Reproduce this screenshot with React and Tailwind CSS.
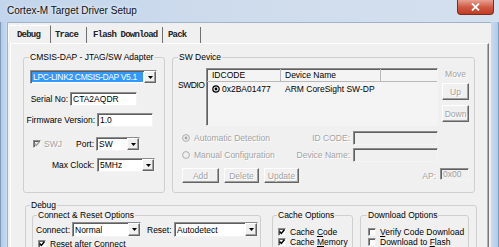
import React from 'react';

const sunken =
  'border border-t-[#8d8d8d] border-l-[#8d8d8d] border-b-[#f4f4f4] border-r-[#f4f4f4] shadow-[inset_1px_1px_0_#5f5f5f]';
const raised =
  'border border-t-white border-l-white border-b-[#646464] border-r-[#646464] shadow-[inset_-1px_-1px_0_#a0a0a0]';
const grayText = 'text-[#a3a3a3] [text-shadow:1px_1px_0_#ffffff]';

const ArrowBtn = () => (
  <div className={`w-[12px] shrink-0 bg-[#f0f0f0] ${raised} flex items-center justify-center`}>
    <svg width="5" height="3" viewBox="0 0 5 3">
      <path d="M0 0h5L2.5 3z" fill="#000" />
    </svg>
  </div>
);

const Combo = ({ value, className, selected }) => (
  <div className={`${className} ${sunken} bg-white flex`}>
    <div className="flex-1 flex items-stretch p-[1px] min-w-0">
      <div
        className={`flex items-center pl-[1px] whitespace-nowrap overflow-hidden ${
          selected ? 'w-full bg-[#3399ff] text-white tracking-[-0.35px]' : ''
        }`}
      >
        {value}
      </div>
    </div>
    <ArrowBtn />
  </div>
);

const TextBox = ({ value, className, disabled }) => (
  <div
    className={`${className} ${sunken} ${
      disabled ? 'bg-[#f0f0f0] text-[#a3a3a3]' : 'bg-white'
    } flex items-center pl-[2px] whitespace-nowrap`}
  >
    {value}
  </div>
);

const Check = ({ checked, disabled }) => (
  <div
    className={`w-[8px] h-[8px] shrink-0 ${sunken} ${
      disabled ? 'bg-[#f0f0f0]' : 'bg-white'
    } flex items-center justify-center`}
  >
    {checked && (
      <svg width="6" height="6" viewBox="0 0 6 6">
        <path
          d="M0.6 2.6 L2.3 4.4 L5.4 0.8"
          stroke={disabled ? '#a0a0a0' : '#000'}
          strokeWidth="1.5"
          fill="none"
        />
      </svg>
    )}
  </div>
);

const Radio = ({ checked }) => (
  <svg width="8" height="8" viewBox="0 0 8 8" className="shrink-0">
    <circle cx="4" cy="4" r="3.4" fill="#f0f0f0" stroke="#a5a5a5" strokeWidth="0.9" />
    {checked && <circle cx="4" cy="4" r="1.4" fill="#a5a5a5" />}
  </svg>
);

const Btn = ({ label, className }) => (
  <div className={`${className} ${raised} bg-[#f0f0f0] flex items-center justify-center ${grayText}`}>
    {label}
  </div>
);

const Group = ({ label, className, legend = 'ml-[4px]', children }) => (
  <fieldset className={`border border-[#cfcfcf] rounded-[3px] shrink-0 ${className}`}>
    <legend className={`${legend} px-[1px] leading-[10px]`}>{label}</legend>
    {children}
  </fieldset>
);

const Tab = ({ label, className, active }) => (
  <div
    className={`${className} border-r border-r-[#6f6f6f] flex items-center whitespace-nowrap ${
      active ? 'h-[18px] border-t border-l border-t-white border-l-white' : 'h-[16px]'
    }`}
  >
    {label}
  </div>
);

export default function App() {
  return (
    <div className="w-[499px] h-[247px] overflow-hidden flex flex-col bg-[#bcd2eb] font-['Liberation_Sans',Arial,sans-serif] text-[8.5px] leading-[10px] text-black">
      {/* title bar */}
      <div className="h-[22px] shrink-0 flex items-start bg-gradient-to-r from-[#c2d5ec] via-[#cfdcec] to-[#d4e0ee]">
        <div className="pl-[7px] pt-[5px] text-[10px] leading-[12px] text-[#111] [text-shadow:0_0_4px_#ffffff]">
          Cortex-M Target Driver Setup
        </div>
        <div className="ml-auto mr-[5px] w-[37px] h-[15px] rounded-b-[4px] border border-t-0 border-[#7d2b1f] bg-gradient-to-b from-[#e8a092] via-[#cf5a44] to-[#c23a22] flex items-center justify-center">
          <svg width="9" height="8" viewBox="0 0 9 8">
            <path d="M1 0.5 L8 7.5 M8 0.5 L1 7.5" stroke="#fff" strokeWidth="1.8" />
          </svg>
        </div>
      </div>

      <div className="flex flex-1 min-h-0">
        <div className="w-[7px] shrink-0 border-l border-[#7f9abb] bg-gradient-to-r from-[#b3cbe7] to-[#c9dbef]" />

        {/* client area */}
        <div className="w-[484px] shrink-0 bg-[#f0f0f0] border-t border-l border-[#9fb3cb] flex flex-col">
          {/* tabs */}
          <div className="h-[20px] shrink-0 flex items-end font-['Liberation_Mono',monospace] font-bold text-[9px] tracking-[-0.8px] text-[#222]">
            <Tab label="Debug" active className="w-[43px] pl-[8px]" />
            <Tab label="Trace" className="w-[36px] pl-[4px]" />
            <Tab label="Flash Download" className="w-[76px] pl-[6px]" />
            <Tab label="Pack" className="w-[38px] pl-[5px]" />
          </div>

          {/* tab panel */}
          <div className="ml-[2px] w-[479px] flex-1 min-h-0 border-t border-l border-white border-r border-r-[#7a7a7a] shadow-[inset_-1px_0_0_#b0b0b0]">
            <div className="flex pl-[12px] pt-[8px]">
              {/* CMSIS-DAP adapter */}
              <Group label="CMSIS-DAP - JTAG/SW Adapter" className="w-[142px] h-[141px]" legend="ml-[5px]">
                <Combo value="LPC-LINK2 CMSIS-DAP V5.1" selected className="mt-[8px] ml-[6px] w-[127px] h-[14px]" />
                <div className="mt-[8px] flex items-center h-[14px]">
                  <span className="w-[44px] text-right">Serial No:</span>
                  <TextBox value="CTA2AQDR" className="ml-[2px] w-[67px] h-[14px]" />
                </div>
                <div className="mt-[7px] flex items-center h-[14px]">
                  <span className="w-[71px] text-right whitespace-nowrap">Firmware Version:</span>
                  <TextBox value="1.0" className="ml-[2px] w-[56px] h-[14px]" />
                </div>
                <div className="mt-[10px] flex items-center h-[14px] pl-[9px]">
                  <Check checked disabled />
                  <span className={`ml-[3px] w-[20px] ${grayText}`}>SWJ</span>
                  <span className="w-[30px] text-right">Port:</span>
                  <Combo value="SW" className="ml-[2px] w-[44px] h-[14px]" />
                </div>
                <div className="mt-[7px] flex items-center h-[14px]">
                  <span className="w-[70px] text-right">Max Clock:</span>
                  <Combo value="5MHz" className="ml-[3px] w-[58px] h-[14px]" />
                </div>
              </Group>

              {/* SW Device */}
              <Group label="SW Device" className="ml-[7px] w-[303px] h-[141px]" legend="ml-[5px]">
                <div className="mt-[6px] h-[58px] flex items-start">
                  <span className="w-[33px] pl-[5px] mt-[12px] tracking-[-0.5px] whitespace-nowrap">SWDIO</span>
                  <div className={`w-[232px] h-[58px] ${sunken} bg-[#f4f4f4] flex flex-col`}>
                    <div className="h-[13px] flex border-b border-[#b9b9b9]">
                      <div className="w-[74px] pl-[5px] flex items-center border-r border-[#b9b9b9]">IDCODE</div>
                      <div className="w-[100px] pl-[4px] flex items-center border-r border-[#b9b9b9]">Device Name</div>
                    </div>
                    <div className="h-[11px] mt-[1px] flex items-center">
                      <div className="w-[74px] pl-[5px] flex items-center">
                        <svg width="8" height="8" viewBox="0 0 8 8" className="shrink-0">
                          <circle cx="4" cy="4" r="3.2" fill="none" stroke="#000" strokeWidth="1.2" />
                          <circle cx="4" cy="4" r="1.4" fill="#000" />
                        </svg>
                        <span className="ml-[2px]">0x2BA01477</span>
                      </div>
                      <div className="pl-[4px] whitespace-nowrap">ARM CoreSight SW-DP</div>
                    </div>
                  </div>
                  <div className="ml-[4px] w-[27px] flex flex-col">
                    <span className={`mt-[1px] text-center ${grayText}`}>Move</span>
                    <Btn label="Up" className="mt-[4px] h-[17px]" />
                    <Btn label="Down" className="mt-[5px] h-[17px]" />
                  </div>
                </div>

                <div className="mt-[5px] h-[14px] flex items-center">
                  <div className="w-[177px] pl-[9px] flex items-center">
                    <Radio checked />
                    <span className={`ml-[4px] ${grayText}`}>Automatic Detection</span>
                    <span className={`ml-auto ${grayText}`}>ID CODE:</span>
                  </div>
                  <TextBox value="" disabled className="ml-[3px] w-[85px] h-[14px]" />
                </div>
                <div className="mt-[3px] h-[14px] flex items-center">
                  <div className="w-[177px] pl-[9px] flex items-center">
                    <Radio />
                    <span className={`ml-[4px] ${grayText}`}>Manual Configuration</span>
                    <span className={`ml-auto ${grayText}`}>Device Name:</span>
                  </div>
                  <TextBox value="" disabled className="ml-[3px] w-[85px] h-[14px]" />
                </div>

                <div className="mt-[6px] h-[15px] flex items-center pl-[9px]">
                  <Btn label="Add" className="w-[37px] h-[15px]" />
                  <Btn label="Delete" className="ml-[5px] w-[35px] h-[15px]" />
                  <Btn label="Update" className="ml-[5px] w-[35px] h-[15px]" />
                  <span className={`ml-auto ${grayText}`}>AP:</span>
                  <TextBox value="0x00" disabled className="ml-[4px] mr-[5px] w-[29px] h-[12px] -mt-[4px]" />
                </div>
              </Group>
            </div>

            {/* Debug */}
            <Group label="Debug" className="mt-[7px] ml-[14px] w-[452px] h-[80px]">
              <div className="flex items-start">
                <Group label="Connect & Reset Options" className="ml-[6px] w-[229px] h-[60px]">
                  <div className="mt-[2px] h-[15px] flex items-center">
                    <span className="w-[39px] pl-[3px]">Connect:</span>
                    <Combo value="Normal" className="w-[69px] h-[15px]" />
                    <span className="ml-[6px] w-[27px]">Reset:</span>
                    <Combo value="Autodetect" className="w-[84px] h-[15px]" />
                  </div>
                  <div className="mt-[2px] h-[10px] flex items-center pl-[5px]">
                    <Check checked />
                    <span className="ml-[4px]">Reset after Connect</span>
                  </div>
                </Group>

                <Group label="Cache Options" className="ml-[11px] w-[81px] h-[60px]">
                  <div className="mt-[7px] h-[10px] flex items-center pl-[5px]">
                    <Check checked />
                    <span className="ml-[4px] whitespace-nowrap">
                      Cache <span className="underline">C</span>ode
                    </span>
                  </div>
                  <div className="h-[10px] flex items-center pl-[5px]">
                    <Check checked />
                    <span className="ml-[4px] whitespace-nowrap">
                      Cache <span className="underline">M</span>emory
                    </span>
                  </div>
                </Group>

                <Group label="Download Options" className="ml-[7px] w-[109px] h-[60px]" legend="ml-[6px]">
                  <div className="mt-[7px] h-[10px] flex items-center pl-[7px]">
                    <Check />
                    <span className="ml-[4px] whitespace-nowrap">
                      <span className="underline">V</span>erify Code Download
                    </span>
                  </div>
                  <div className="h-[10px] flex items-center pl-[7px]">
                    <Check />
                    <span className="ml-[4px] whitespace-nowrap">
                      Download to <span className="underline">F</span>lash
                    </span>
                  </div>
                </Group>
              </div>
            </Group>
          </div>
        </div>

        <div className="flex-1 border-r border-[#7f9abb] bg-gradient-to-r from-[#c9dbef] to-[#b3cbe7]" />
      </div>
    </div>
  );
}
